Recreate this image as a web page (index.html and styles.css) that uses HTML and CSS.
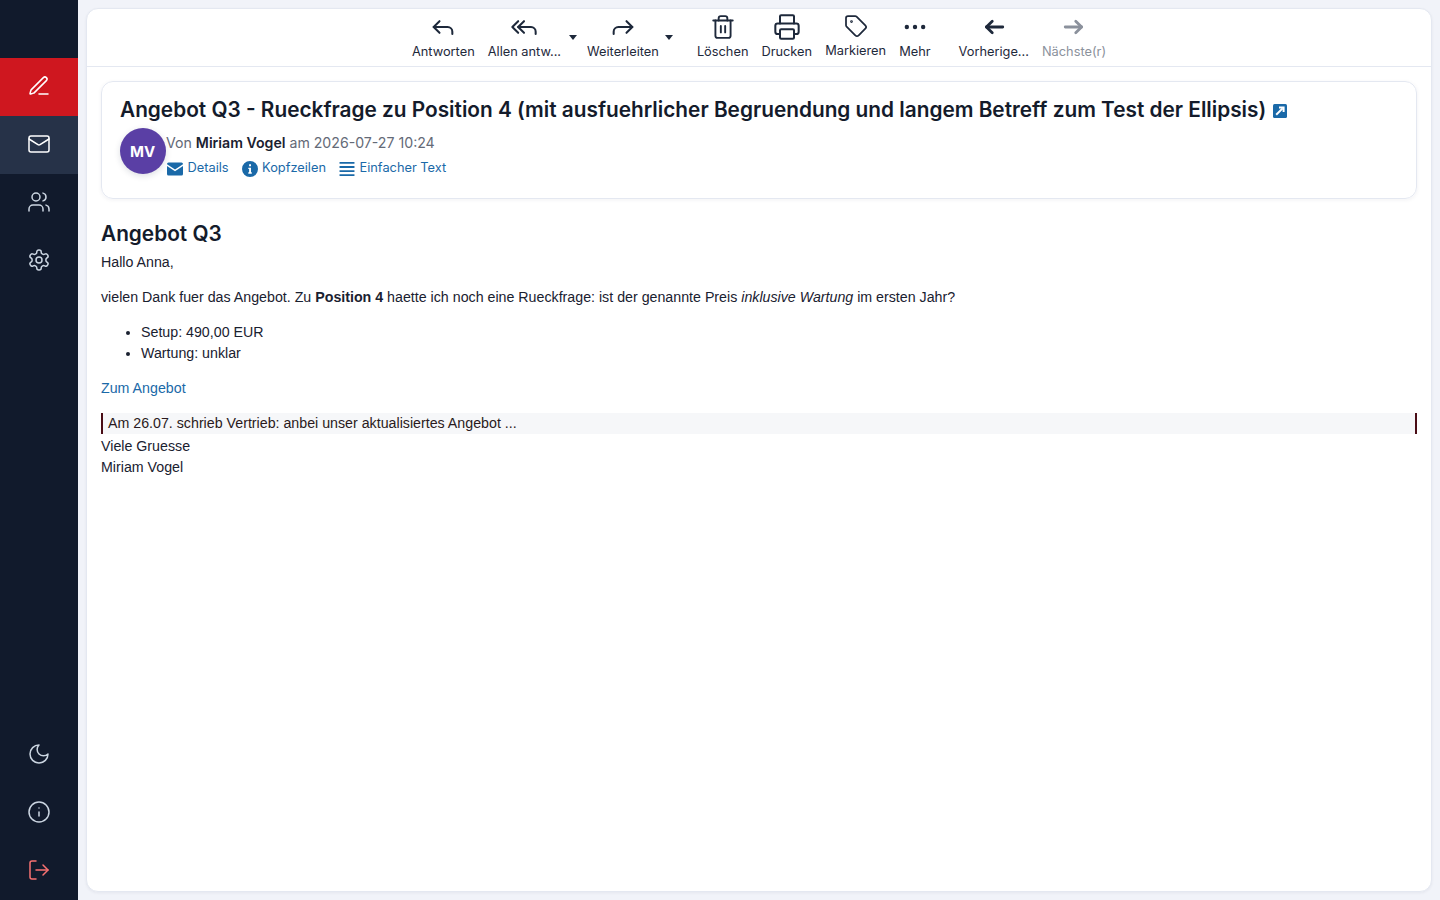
FILE: index.html
```html
<!DOCTYPE html>
<html lang="de">
<head>
    <meta charset="UTF-8">
    <meta name="viewport" content="width=device-width, initial-scale=1.0">
    <title>Angebot Q3</title>
    <link rel="stylesheet" href="styles.css">
</head>
<body>

<div class="app">
    <nav class="sidebar">
        <a class="nav-item nav-compose">
            <svg class="nav-icon" viewBox="0 0 24 24"><path d="M12 20h9"/><path d="M16.376 3.622a1 1 0 0 1 3.002 3.002L7.368 18.635a2 2 0 0 1-.855.506l-2.872.838a.5.5 0 0 1-.62-.62l.838-2.872a2 2 0 0 1 .506-.854z"/></svg>
        </a>
        <a class="nav-item nav-active">
            <svg class="nav-icon" viewBox="0 0 24 24"><rect x="2" y="4" width="20" height="16" rx="2"/><path d="m22 7-8.97 5.7a1.94 1.94 0 0 1-2.06 0L2 7"/></svg>
        </a>
        <a class="nav-item">
            <svg class="nav-icon" viewBox="0 0 24 24"><path d="M16 21v-2a4 4 0 0 0-4-4H6a4 4 0 0 0-4 4v2"/><circle cx="9" cy="7" r="4"/><path d="M22 21v-2a4 4 0 0 0-3-3.87"/><path d="M16 3.13a4 4 0 0 1 0 7.75"/></svg>
        </a>
        <a class="nav-item">
            <svg class="nav-icon" viewBox="0 0 24 24"><path d="M12.22 2h-.44a2 2 0 0 0-2 2v.18a2 2 0 0 1-1 1.73l-.43.25a2 2 0 0 1-2 0l-.15-.08a2 2 0 0 0-2.73.73l-.22.38a2 2 0 0 0 .73 2.73l.15.1a2 2 0 0 1 1 1.72v.51a2 2 0 0 1-1 1.74l-.15.09a2 2 0 0 0-.73 2.73l.22.38a2 2 0 0 0 2.73.73l.15-.08a2 2 0 0 1 2 0l.43.25a2 2 0 0 1 1 1.73V20a2 2 0 0 0 2 2h.44a2 2 0 0 0 2-2v-.18a2 2 0 0 1 1-1.73l.43-.25a2 2 0 0 1 2 0l.15.08a2 2 0 0 0 2.73-.73l.22-.39a2 2 0 0 0-.73-2.73l-.15-.08a2 2 0 0 1-1-1.74v-.5a2 2 0 0 1 1-1.74l.15-.09a2 2 0 0 0 .73-2.73l-.22-.38a2 2 0 0 0-2.73-.73l-.15.08a2 2 0 0 1-2 0l-.43-.25a2 2 0 0 1-1-1.73V4a2 2 0 0 0-2-2z"/><circle cx="12" cy="12" r="3"/></svg>
        </a>
        <div class="nav-spacer"></div>
        <a class="nav-item">
            <svg class="nav-icon" viewBox="0 0 24 24"><path d="M12 3a6 6 0 0 0 9 9 9 9 0 1 1-9-9Z"/></svg>
        </a>
        <a class="nav-item">
            <svg class="nav-icon" viewBox="0 0 24 24"><circle cx="12" cy="12" r="10"/><path d="M12 16v-4"/><path d="M12 8h.01"/></svg>
        </a>
        <a class="nav-item nav-logout">
            <svg class="nav-icon" viewBox="0 0 24 24"><path d="M9 21H5a2 2 0 0 1-2-2V5a2 2 0 0 1 2-2h4"/><path d="m16 17 5-5-5-5"/><path d="M21 12H9"/></svg>
        </a>
    </nav>

    <main class="content">
        <div class="panel">
            <div class="toolbar">
                <button class="tool">
                    <svg class="tool-icon" viewBox="0 0 24 24"><path d="m9 17-5-5 5-5"/><path d="M20 18v-2a4 4 0 0 0-4-4H4"/></svg>
                    <span>Antworten</span>
                </button>
                <button class="tool tool-menu">
                    <svg class="tool-icon" viewBox="0 0 24 24"><path d="m7 17-5-5 5-5"/><path d="m12 17-5-5 5-5"/><path d="M22 18v-2a4 4 0 0 0-4-4H7"/></svg>
                    <span>Allen antw...</span>
                </button>
                <span class="caret caret-reply"></span>
                <button class="tool tool-menu">
                    <svg class="tool-icon" viewBox="0 0 24 24"><path d="m15 17 5-5-5-5"/><path d="M4 18v-2a4 4 0 0 1 4-4h12"/></svg>
                    <span>Weiterleiten</span>
                </button>
                <span class="caret caret-forward"></span>
                <button class="tool tool-trash">
                    <svg class="tool-icon" viewBox="0 0 24 24"><path d="M3 6h18"/><path d="M19 6v14a2 2 0 0 1-2 2H7a2 2 0 0 1-2-2V6"/><path d="M8 6V4a2 2 0 0 1 2-2h4a2 2 0 0 1 2 2v2"/><path d="M10 11v6"/><path d="M14 11v6"/></svg>
                    <span>Löschen</span>
                </button>
                <button class="tool">
                    <svg class="tool-icon" viewBox="0 0 24 24"><path d="M6 18H4a2 2 0 0 1-2-2v-5a2 2 0 0 1 2-2h16a2 2 0 0 1 2 2v5a2 2 0 0 1-2 2h-2"/><path d="M6 9V3a1 1 0 0 1 1-1h10a1 1 0 0 1 1 1v6"/><rect x="6" y="14" width="12" height="8" rx="1"/></svg>
                    <span>Drucken</span>
                </button>
                <button class="tool tool-tag">
                    <svg class="tool-icon" viewBox="0 0 24 24"><path d="M12.586 2.586A2 2 0 0 0 11.172 2H4a2 2 0 0 0-2 2v7.172a2 2 0 0 0 .586 1.414l8.704 8.704a2.426 2.426 0 0 0 3.42 0l6.58-6.58a2.426 2.426 0 0 0 0-3.42z"/><circle cx="7.5" cy="7.5" r=".5"/></svg>
                    <span>Markieren</span>
                </button>
                <button class="tool tool-more">
                    <svg class="tool-icon" viewBox="0 0 24 24"><circle cx="12" cy="12" r="1"/><circle cx="19" cy="12" r="1"/><circle cx="5" cy="12" r="1"/></svg>
                    <span>Mehr</span>
                </button>
                <button class="tool">
                    <svg class="tool-icon tool-icon-bold" viewBox="0 0 24 24"><path d="m10.5 7-5 5 5 5"/><path d="M19.5 12H5.5"/></svg>
                    <span>Vorherige...</span>
                </button>
                <button class="tool tool-disabled">
                    <svg class="tool-icon tool-icon-bold" viewBox="0 0 24 24"><path d="M4.5 12h14"/><path d="m13.5 7 5 5-5 5"/></svg>
                    <span>Nächste(r)</span>
                </button>
            </div>

            <div class="message">
                <div class="message-head">
                    <h1 class="subject">
                        Angebot Q3 - Rueckfrage zu Position 4 (mit ausfuehrlicher Begruendung und langem Betreff zum Test der Ellipsis)
                        <svg class="open-icon" viewBox="0 0 14 14"><rect width="14" height="14" rx="1.5"/><path d="M3.2 10.8 9.6 4.4"/><path d="M6 3.4h4.6V8" fill="none"/></svg>
                    </h1>
                    <div class="sender">
                        <div class="avatar">MV</div>
                        <div class="sender-info">
                            <div class="sender-line">Von <strong>Miriam Vogel</strong> am 2026-07-27 10:24</div>
                            <div class="sender-links">
                                <a class="head-link">
                                    <svg class="link-icon" viewBox="0 0 16 13"><path d="M0 1.5A1.5 1.5 0 0 1 1.5 0h13A1.5 1.5 0 0 1 16 1.5v.3L8 7 0 1.8z"/><path d="M0 3.6 8 8.8l8-5.2v7.9a1.5 1.5 0 0 1-1.5 1.5h-13A1.5 1.5 0 0 1 0 11.5z"/></svg>
                                    Details
                                </a>
                                <a class="head-link">
                                    <svg class="link-icon link-icon-round" viewBox="0 0 16 16"><path fill-rule="evenodd" d="M8 0a8 8 0 1 1 0 16A8 8 0 0 1 8 0zm-.9 3.2v2h1.9v-2zM6.3 6.8v1.3h.8v3.2h-.8v1.4h3.5v-1.4H9V6.8z"/></svg>
                                    Kopfzeilen
                                </a>
                                <a class="head-link">
                                    <svg class="link-icon" viewBox="0 0 16 15"><path d="M0 0h16v2H0zM0 4.4h16v2H0zM0 8.8h16v2H0zM0 13h16v2H0z"/></svg>
                                    Einfacher Text
                                </a>
                            </div>
                        </div>
                    </div>
                </div>

                <div class="message-body">
                    <h2 class="body-title">Angebot Q3</h2>
                    <p>Hallo Anna,</p>
                    <p>vielen Dank fuer das Angebot. Zu <strong>Position 4</strong> haette ich noch eine Rueckfrage: ist der genannte Preis <em>inklusive Wartung</em> im ersten Jahr?</p>
                    <ul>
                        <li>Setup: 490,00 EUR</li>
                        <li>Wartung: unklar</li>
                    </ul>
                    <p><a class="body-link">Zum Angebot</a></p>
                    <blockquote>Am 26.07. schrieb Vertrieb: anbei unser aktualisiertes Angebot ...</blockquote>
                    <div class="signature">Viele Gruesse<br>Miriam Vogel</div>
                </div>
            </div>
        </div>
    </main>
</div>

</body>
</html>
```

FILE: styles.css
```css
* {
    box-sizing: border-box;
}

html, body {
    height: 100%;
}

body {
    margin: 0;
    background-color: #f1f3f9;
    color: #1a2130;
    font-family: Inter, "Liberation Sans", sans-serif;
}

.app {
    display: flex;
    height: 100vh;
}

/* sidebar */
.sidebar {
    display: flex;
    flex-direction: column;
    flex: 0 0 78px;
    padding-top: 58px;
    background-color: #111a2c;
}

.nav-item {
    display: flex;
    align-items: center;
    justify-content: center;
    height: 58px;
    padding-bottom: 2px;
    color: #cbd5e1;
}

.nav-compose {
    background-color: #cf171f;
    color: #fff;
}

.nav-active {
    background-color: #263248;
    color: #fff;
}

.nav-logout {
    color: #f87171;
}

.nav-spacer {
    flex: 1;
}

.nav-icon {
    width: 24px;
    height: 24px;
    fill: none;
    stroke: currentColor;
    stroke-width: 1.5;
    stroke-linecap: round;
    stroke-linejoin: round;
}

/* main panel */
.content {
    flex: 1;
    min-width: 0;
    padding: 8px;
}

.panel {
    height: 100%;
    overflow: hidden;
    background-color: #fff;
    border: 1px solid #e4e8f1;
    border-radius: 12px;
    box-shadow: 0 1px 3px rgba(30, 41, 70, 0.06);
}

/* toolbar */
.toolbar {
    display: flex;
    align-items: flex-start;
    justify-content: center;
    gap: 13px;
    height: 58px;
    padding-top: 4px;
    border-bottom: 1px solid #e4e8f1;
}

.tool {
    display: flex;
    flex-direction: column;
    align-items: center;
    padding: 0;
    border: 0;
    background: none;
    color: #1e293b;
    font-family: Inter, "Liberation Sans", sans-serif;
    font-size: 12.8px;
    line-height: 16px;
    white-space: nowrap;
}

.tool-icon {
    width: 28px;
    height: 28px;
    margin-bottom: 3px;
    fill: none;
    stroke: currentColor;
    stroke-width: 1.75;
    stroke-linecap: round;
    stroke-linejoin: round;
}

.tool-icon-bold {
    stroke-width: 2.4;
}

.tool-trash .tool-icon {
    width: 26px;
    height: 26px;
    margin: 1px 0 4px;
}

.tool-tag .tool-icon {
    width: 24px;
    height: 24px;
    margin: 1px 0 5px;
}

.tool-more {
    margin-right: 15px;
}

.tool-more circle {
    fill: currentColor;
}

.tool-disabled {
    color: #8b919c;
}

.caret {
    width: 0;
    height: 0;
    margin-top: 22px;
    margin-left: -5px;
    margin-right: -3px;
    border-top: 5px solid #1e293b;
    border-left: 4px solid transparent;
    border-right: 4px solid transparent;
}

.caret-forward {
    margin-left: -7px;
    margin-right: 11px;
}

/* message */
.message {
    padding: 14px 14px 0;
}

.message-head {
    height: 118px;
    padding: 13px 18px 12px;
    border: 1px solid #e4e8f1;
    border-radius: 12px;
    box-shadow: 0 1px 4px rgba(30, 41, 70, 0.06);
}

.subject {
    margin: 0 0 3px;
    font-size: 20.8px;
    font-weight: 600;
    line-height: 30px;
    color: #141b2b;
    white-space: nowrap;
}

.open-icon {
    width: 14px;
    height: 14px;
    margin-left: 1px;
    vertical-align: -1px;
    fill: #1a69a8;
}

.open-icon path {
    stroke: #fff;
    stroke-width: 2;
}

.sender {
    display: flex;
}

.avatar {
    display: flex;
    align-items: center;
    justify-content: center;
    flex: 0 0 46px;
    height: 46px;
    padding-right: 1px;
    border-radius: 50%;
    background-color: #5a3fa5;
    box-shadow: 0 2px 6px rgba(30, 41, 70, 0.15);
    color: #fff;
    font-size: 15px;
    font-weight: 700;
}

.sender-line {
    margin-top: 4px;
    font-size: 14.15px;
    line-height: 22px;
    color: #646a77;
}

.sender-line strong {
    font-weight: 600;
    color: #1a2130;
}

.sender-links {
    display: flex;
    gap: 13px;
    margin: 4px 0 0 1px;
}

.head-link {
    display: flex;
    align-items: center;
    gap: 4.5px;
    font-size: 12.8px;
    line-height: 20px;
    color: #1a69a8;
}

.link-icon {
    width: 16px;
    height: 14px;
    margin-top: 2px;
    fill: currentColor;
}

.link-icon-round {
    height: 16px;
}

/* mail body */
.message-body {
    font-family: "Liberation Sans", Arial, sans-serif;
    font-size: 14.23px;
    line-height: 21px;
    color: #1a2130;
}

.body-title {
    margin: 20px 0 0;
    font-family: Inter, "Liberation Sans", sans-serif;
    font-size: 20.8px;
    font-weight: 600;
    line-height: 30px;
    color: #141b2b;
}

.message-body p {
    margin: 3px 0 14px;
}

.message-body p + p {
    margin-top: 0;
}

.message-body ul {
    margin: 0 0 14px;
    padding-left: 40px;
}

.body-link {
    color: #1a69a8;
}

blockquote {
    margin: 0 0 2px;
    padding-left: 5px;
    background-color: #f6f7f9;
    border-left: 2px solid #4a0d16;
    border-right: 2px solid #4a0d16;
    color: #2a1a20;
}
```
